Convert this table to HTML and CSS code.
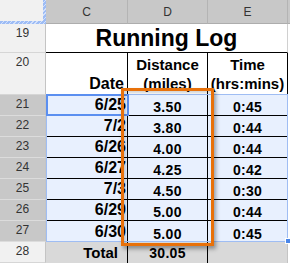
FILE: index.html
```html
<!DOCTYPE html>
<html>
<head>
<meta charset="utf-8">
<link rel="stylesheet" href="styles.css">
</head>
<body>
<div class="sheet">
  <div class="corner"><div class="corner-inner"></div></div>
  <div class="colhead">C</div>
  <div class="colhead">D</div>
  <div class="colhead">E</div>
  <div class="colhead sliver"></div>

  <div class="rowhead">19</div>
  <div class="title">Running Log</div>
  <div class="blank"></div>

  <div class="rowhead">20</div>
  <div class="hcell date-h">Date</div>
  <div class="hcell two">Distance<br>(miles)</div>
  <div class="hcell two last">Time<br>(hrs:mins)</div>
  <div class="blank"></div>

  <div class="rowhead sel">21</div>
  <div class="cell date">6/25</div><div class="cell num">3.50</div><div class="cell num last">0:45</div><div class="blank"></div>
  <div class="rowhead sel">22</div>
  <div class="cell date">7/2</div><div class="cell num">3.80</div><div class="cell num last">0:44</div><div class="blank"></div>
  <div class="rowhead sel">23</div>
  <div class="cell date">6/26</div><div class="cell num">4.00</div><div class="cell num last">0:44</div><div class="blank"></div>
  <div class="rowhead sel">24</div>
  <div class="cell date">6/27</div><div class="cell num">4.25</div><div class="cell num last">0:42</div><div class="blank"></div>
  <div class="rowhead sel">25</div>
  <div class="cell date">7/3</div><div class="cell num">4.50</div><div class="cell num last">0:30</div><div class="blank"></div>
  <div class="rowhead sel">26</div>
  <div class="cell date">6/29</div><div class="cell num">5.00</div><div class="cell num last">0:44</div><div class="blank"></div>
  <div class="rowhead sel">27</div>
  <div class="cell date final">6/30</div><div class="cell num final">5.00</div><div class="cell num last final">0:45</div><div class="blank"></div>

  <div class="rowhead">28</div>
  <div class="tcell total-label">Total</div>
  <div class="tcell total-num">30.05</div>
  <div class="tcell tlast"></div>
  <div class="blank"></div>

  <div class="range"></div>
  <div class="active"></div>
  <div class="handle"></div>
  <div class="callout"></div>
</div>
</body>
</html>
```

FILE: styles.css
```css
html, body {
  margin: 0;
  padding: 0;
  background: #ffffff;
  overflow: hidden;
}

.sheet {
  position: relative;
  width: 290px;
  height: 263px;
  display: grid;
  grid-template-columns: 46px 82px 80px 80px 2px;
  grid-template-rows: 24px 29px 42px repeat(7, 21px) 21px;
  font-family: "Liberation Sans", Arial, sans-serif;
  color: #000;
}

.sheet > div {
  box-sizing: border-box;
}

.corner {
  background: repeating-linear-gradient(135deg, #9dbcf5 0 2px, #d3e1fb 2px 3px);
}

.corner-inner {
  width: 43px;
  height: 21px;
  background: #f1f1f1;
}

.colhead {
  background: #c8c8c8;
  border-right: 1px solid #b4b4b4;
  border-bottom: 1px solid #adadad;
  font-size: 12px;
  color: #333;
  display: flex;
  align-items: center;
  justify-content: center;
}

.colhead.sliver {
  border-right: none;
}

.rowhead {
  background: #f1f1f1;
  border-right: 1px solid #c4c4c4;
  border-bottom: 1px solid #d6d6d6;
  font-size: 12px;
  line-height: 14px;
  color: #333;
  text-align: center;
  padding-top: 2px;
}

.rowhead.sel {
  background: #c8c8c8;
  border-bottom: 1px solid #dcdcdc;
}

.title {
  grid-column: 2 / 5;
  background: #fff;
  border-bottom: 1px solid #000;
  border-right: 1px solid #d0d0d0;
  font-size: 23px;
  font-weight: bold;
  text-align: center;
  line-height: 28px;
}

.blank {
  background: #fff;
}

.hcell {
  background: #fff;
  border-right: 1px solid #000;
  font-weight: bold;
  font-size: 15px;
  line-height: 19px;
  display: flex;
  align-items: flex-end;
  padding-bottom: 2px;
}

.hcell.date-h {
  justify-content: flex-end;
  font-size: 16px;
  padding-right: 3px;
}

.hcell.two {
  justify-content: center;
  text-align: center;
}

.cell {
  background: #e8f0fe;
  border-right: 1px solid #000;
  border-bottom: 1px solid #000;
  font-weight: bold;
  display: flex;
  overflow: hidden;
}

.cell.final {
  border-bottom: none;
}

.cell.date {
  font-size: 16px;
  line-height: 18px;
  align-items: center;
  justify-content: flex-end;
  padding-right: 1px;
}

.cell.num {
  font-size: 14px;
  line-height: 16px;
  letter-spacing: 0.3px;
  align-items: flex-end;
  justify-content: center;
}

.tcell {
  background: #d9d9d9;
  border-right: 1px solid #000;
  font-weight: bold;
  font-size: 14px;
  line-height: 16px;
  display: flex;
  align-items: center;
  padding-top: 1px;
}

.tcell.tlast {
  border-right: 1px solid #c4c4c4;
}

.total-label {
  justify-content: flex-end;
  font-size: 15px;
  padding-right: 9px;
}

.total-num {
  justify-content: center;
  letter-spacing: 0.3px;
}

.range {
  position: absolute;
  left: 46px;
  top: 94px;
  width: 242px;
  height: 148px;
  border: 1px solid #9fbdf3;
  box-sizing: border-box;
}

.active {
  position: absolute;
  left: 46px;
  top: 94px;
  width: 83px;
  height: 22px;
  border: 2px solid #5b8ff0;
  box-sizing: border-box;
}

.handle {
  position: absolute;
  left: 285px;
  top: 238px;
  width: 6px;
  height: 6px;
  background: #4a86e8;
  border: 1px solid #fff;
  box-sizing: border-box;
}

.callout {
  position: absolute;
  left: 121px;
  top: 88px;
  width: 93px;
  height: 158px;
  border: 3px solid #e8710a;
  box-sizing: border-box;
  box-shadow: 2px 3px 4px rgba(0, 0, 0, 0.35), inset 2px 2px 3px rgba(0, 0, 0, 0.18);
}
```
